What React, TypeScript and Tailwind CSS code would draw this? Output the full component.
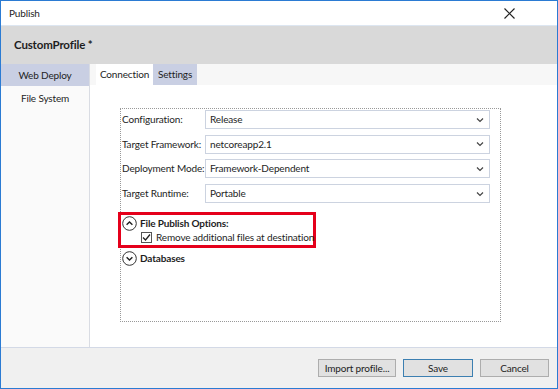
import React from "react";

const Chevron = () => (
  <svg width="10" height="10" viewBox="0 0 10 10" className="text-[#444] shrink-0">
    <path d="M2 3.5 L5 6.5 L8 3.5" fill="none" stroke="currentColor" strokeWidth="1.2" />
  </svg>
);

const Field = ({ label, value }: { label: string; value: string }) => (
  <div className="flex items-center h-[19px] mb-[5.7px]">
    <div className="w-[84px] shrink-0 pl-[1px] whitespace-nowrap">{label}</div>
    <div className="w-[285px] h-[19px] border border-[#ccd3e0] bg-white flex items-center justify-between pl-[4px] pr-[4px] whitespace-nowrap">
      <span>{value}</span>
      <Chevron />
    </div>
  </div>
);

const CircleIcon = ({ up }: { up?: boolean }) => (
  <svg width="15" height="15" viewBox="0 0 15 15" className="shrink-0">
    <circle cx="7.5" cy="7.5" r="6.8" fill="white" stroke="#333" strokeWidth="1" />
    <path
      d={up ? "M4.6 8.8 L7.5 5.9 L10.4 8.8" : "M4.6 6.2 L7.5 9.1 L10.4 6.2"}
      fill="none"
      stroke="#222"
      strokeWidth="1.4"
    />
  </svg>
);

const Button = ({ label, focused, w }: { label: string; focused?: boolean; w: string }) => (
  <div
    className={`${w} h-[18px] flex items-center justify-center bg-[#e1e1e1] whitespace-nowrap border ${
      focused ? "border-[#3c7fb1]" : "border-[#adadad]"
    }`}
  >
    {label}
  </div>
);

export default function App() {
  return (
    <div
      className="w-[558px] h-[389px] border border-[#2b7bd3] bg-white flex flex-col text-[#1e1e1e] text-[10px] tracking-[-0.15px]"
      style={{ fontFamily: '"Segoe UI", Lato, sans-serif' }}
    >
      <div className="h-[25px] shrink-0 flex items-center justify-between pl-[8px] pr-[42px] border-b border-[#dde6f1]">
        <span className="pt-[1px]">Publish</span>
        <svg width="11" height="11" viewBox="0 0 11 11">
          <path d="M0.5 0.5 L10.5 10.5 M10.5 0.5 L0.5 10.5" stroke="#222" strokeWidth="1.2" />
        </svg>
      </div>
      <div className="h-[38px] shrink-0 bg-[#d9d9d9] flex items-center pl-[13px] text-[11.5px] font-bold">
        CustomProfile *
      </div>
      <div className="flex-1 flex min-h-0">
        <div className="w-[89px] shrink-0 bg-[#fafafa] border-r border-[#d9dce3]">
          <div className="h-[22px] bg-[#c9cfe3] flex items-center justify-center">Web Deploy</div>
          <div className="h-[24px] flex items-center justify-center">File System</div>
        </div>
        <div className="flex-1 flex flex-col">
          <div className="h-[21px] shrink-0 bg-[#f7f7f7] flex pl-[6px]">
            <div className="w-[57px] flex items-center justify-center bg-white">Connection</div>
            <div className="w-[44px] flex items-center justify-center bg-[#c9cfe3]">Settings</div>
          </div>
          <div className="pl-[30px] pt-[23px]">
            <div className="w-[381px] h-[214px] border border-dotted border-[#999] pt-[1px]">
              <Field label="Configuration:" value="Release" />
              <Field label="Target Framework:" value="netcoreapp2.1" />
              <Field label="Deployment Mode:" value="Framework-Dependent" />
              <Field label="Target Runtime:" value="Portable" />
              <div className="mt-[9px] -ml-[3px] w-[198px] h-[36px] border-[3px] border-[#e5001b] pl-[1px] pt-[1px]">
                <div className="flex items-center gap-[3px] h-[15px]">
                  <CircleIcon up />
                  <span className="font-bold whitespace-nowrap">File Publish Options:</span>
                </div>
                <div className="flex items-center gap-[4px] ml-[19px] mt-[1px] h-[11px]">
                  <span className="w-[11px] h-[11px] shrink-0 border border-[#555] bg-white flex items-center justify-center">
                    <svg width="9" height="9" viewBox="0 0 9 9">
                      <path d="M1 4.5 L3.5 7 L8 1.5" fill="none" stroke="#222" strokeWidth="1.3" />
                    </svg>
                  </span>
                  <span className="whitespace-nowrap">Remove additional files at destination</span>
                </div>
              </div>
              <div className="flex items-center gap-[3px] ml-[1px] mt-[3px] h-[15px]">
                <CircleIcon />
                <span className="font-bold">Databases</span>
              </div>
            </div>
          </div>
        </div>
      </div>
      <div className="h-[41px] shrink-0 bg-[#f0f0f0] border-t border-[#d3d9e6] flex items-center justify-end gap-[7px] pr-[8px]">
        <Button label="Import profile..." w="w-[78px]" />
        <Button label="Save" focused w="w-[70px]" />
        <Button label="Cancel" w="w-[69px]" />
      </div>
    </div>
  );
}
